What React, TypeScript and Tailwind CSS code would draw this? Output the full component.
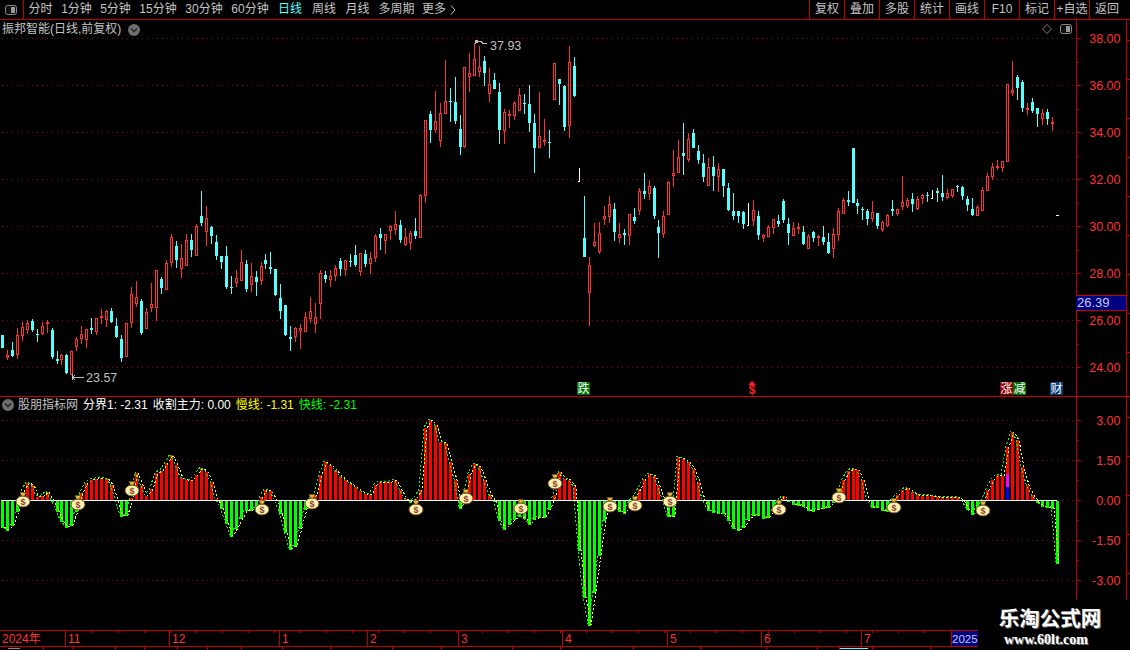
const candleData = `c,335,348,335,348 r,355,358,350,360 c,350,356,342,357 r,335,355,328,359 r,327,336,322,341 r,323,330,320,334 c,321,330,319,332 c,334,335,329,342 r,326,334,322,335 r,322,324,320,333
c,330,357,328,359 c,359,361,351,364 r,355,360,354,365 c,355,373,354,374 r,351,375,351,375 r,339,347,337,351 r,334,339,326,344 r,329,340,329,348 c,328,330,318,334 r,318,332,318,335
r,316,318,309,324 r,311,320,310,327 c,311,322,308,323 c,326,337,318,338 c,339,358,335,362 r,323,357,323,357 r,294,323,287,328 r,297,304,281,307 c,301,333,299,335 r,312,329,308,329
r,304,308,283,312 r,270,308,270,321 c,279,288,277,294 r,263,290,260,290 r,237,263,234,267 c,246,260,241,268 r,258,269,244,278 r,240,266,234,266 c,240,250,234,257 r,226,256,224,256
c,216,223,191,226 r,218,232,206,246 c,227,236,226,244 c,242,256,235,260 c,256,262,256,269 c,256,287,246,289 c,287,288,276,294 r,278,283,270,287 r,262,281,250,281 c,264,289,260,292
r,276,285,263,292 c,277,282,271,296 r,266,281,262,285 c,260,264,254,269 c,267,269,252,274 c,269,295,269,296 c,298,311,284,319 c,305,335,305,336 c,337,339,326,351 r,328,337,327,342
r,328,331,324,349 r,317,332,312,332 r,311,319,297,323 r,317,324,303,333 r,273,304,270,319 c,275,279,271,283 r,276,280,270,287 r,268,276,265,281 c,261,269,258,276 r,260,270,260,276
c,261,262,254,267 c,255,265,245,267 r,253,272,253,276 c,254,264,250,267 r,258,264,252,274 r,236,258,234,262 c,234,238,228,250 r,234,241,234,254 r,226,231,225,240 r,224,230,211,235
c,225,240,220,243 r,237,245,228,246 r,233,243,231,250 c,231,236,218,239 r,195,238,194,238 r,120,196,120,203 c,114,130,111,143 r,121,130,91,133 r,113,141,103,147 r,101,114,60,114
c,101,102,88,122 c,102,121,77,124 c,129,147,115,155 r,67,147,67,148 r,73,77,53,92 r,59,76,43,76 r,67,72,46,77 c,61,73,56,86 r,84,94,68,102 c,80,89,73,89
c,92,130,83,144 r,112,131,109,144 r,114,116,110,128 r,103,116,101,120 r,95,111,88,111 c,103,104,94,114 c,104,123,85,132 c,123,148,114,173 r,136,148,92,148 r,140,142,119,146
c,142,143,130,158 r,63,100,63,100 c,79,84,79,105 c,86,127,85,131 r,62,126,46,138 c,66,96,57,97 w,181,182,168,182 c,238,257,196,257 r,265,293,257,326 r,242,246,223,247
r,233,252,222,254 r,216,219,206,225 r,204,217,196,223 c,209,232,203,241 r,234,238,223,243 c,233,235,229,245 r,214,236,214,245 c,217,221,208,224 r,191,211,188,215 c,191,194,173,199
r,186,194,180,200 c,188,216,186,219 c,227,233,220,258 r,216,234,211,238 r,182,215,181,215 r,173,176,150,187 r,157,173,140,173 c,153,156,123,175 r,139,160,133,162 c,133,148,129,148
c,151,160,145,164 c,163,177,154,182 r,167,186,158,186 c,167,176,156,191 r,169,177,163,192 c,169,186,169,197 c,188,210,183,211 c,211,216,193,220 c,211,216,211,223 c,212,224,211,229
w,225,226,203,226 r,210,221,200,226 c,216,235,211,240 r,235,238,234,242 r,227,237,225,237 r,219,228,219,234 c,221,224,215,227 c,201,220,199,223 c,224,233,218,245 r,228,236,222,236
r,227,229,223,234 c,232,244,226,245 r,236,249,234,249 c,232,238,231,242 r,236,238,235,246 c,237,242,226,245 c,242,253,233,254 r,234,249,228,258 r,211,235,208,241 r,200,214,198,214
c,200,202,191,206 c,148,203,148,203 c,203,206,199,214 c,209,210,207,220 c,211,219,209,225 r,212,219,201,222 c,213,226,213,229 r,222,230,221,232 r,215,226,214,227 c,209,211,200,216
r,209,214,209,216 r,202,207,176,210 r,200,206,198,208 c,199,204,193,212 r,199,209,196,210 r,195,199,194,204 c,195,196,192,202 w,198,199,190,199 c,191,193,188,202 c,193,197,175,201
r,193,198,189,199 r,189,196,189,198 c,186,187,185,192 c,187,196,186,200 c,199,205,196,211 c,209,215,198,216 r,207,216,205,216 r,190,211,187,211 r,176,191,173,191 r,167,177,163,180
r,166,167,160,170 r,161,168,161,172 r,84,162,84,162 r,90,93,61,96 c,77,88,75,100 c,82,108,80,112 r,108,110,103,115 c,102,111,98,113 c,108,114,108,127 r,113,119,109,125
c,112,119,109,125 r,122,124,117,131`

const candles = candleData.split(/\s+/).map((s) => {
  const [kind, top, bottom, high, low] = s.split(',')
  return { kind, top: +top, bottom: +bottom, high: +high, low: +low }
})

const indicatorPoints = `1,526 7,530 12,525 16,516 19,500 22,492 27,483 33,485 36,497 42,496 47,492 50,500 54,502 60,520 65,527 70,527 75,517 78,500 82,490 87,481 92,480 97,479 102,478 107,478 112,487 116,500
120,505 122,527 125,520 128,505 130,500 133,495 137,466 142,490 147,497 152,487 155,473 160,473 165,465 170,457 172,452 175,462 180,477 185,480 190,481 195,477 200,468 205,470 210,478 215,497 217,500
220,505 225,520 230,537 235,530 240,520 245,510 250,510 255,510 259,500 265,490 272,491 275,500 277,503 282,520 287,540 292,555 297,540 302,520 306,505 308,500 315,495 320,475 325,462 330,465 335,470 340,476
345,480 350,484 355,487 360,491 365,494 370,495 375,485 380,482 390,482 395,480 400,490 403,497 406,500 410,502 414,500 418,495 420,490 424,430 430,420 435,425 440,442 445,443 450,462 455,480 458,500
460,508 463,500 466,490 470,468 475,463 480,468 485,483 490,497 493,500 497,505 500,527 505,530 510,523 515,518 520,516 525,518 530,525 535,517 545,517 550,507 553,500 555,490 560,468 565,482 570,480 573,482 576,497 577,500
578,540 584,597 589,625 594,592 599,555 604,520 606,503 615,505 620,512 624,513 627,510 630,500 636,495 640,487 645,477 650,473 655,477 660,492 663,500 665,520 670,513 674,517 676,503
677,457 685,460 690,463 695,473 700,488 703,500 705,508 710,512 715,512 720,513 725,513 730,525 735,530 740,530 745,525 750,515 755,515 760,515 765,520 770,515 775,507 779,500 782,497 785,493 787,500
790,503 795,505 800,505 805,507 810,512 815,510 820,508 825,508 830,507 833,502 837,498 840,492 845,472 850,470 855,469 860,472 862,480 865,495 867,500 868,508 875,507 880,508 885,512 888,510 892,500
900,492 905,487 910,490 915,495 920,496 925,495 940,497 960,497 962,500 965,507 972,514 975,510 980,506 983,500 987,490 992,480 997,475 1002,476 1007,447 1012,432 1015,443 1017,440 1022,467 1027,485 1032,495 1035,500
1037,502 1042,506 1047,507 1052,508 1057,563`
  .split(/\s+/)
  .map((s) => s.split(',').map(Number))

function indicatorAt(x: number) {
  for (let i = 1; i < indicatorPoints.length; i++) {
    const [x0, y0] = indicatorPoints[i - 1]
    const [x1, y1] = indicatorPoints[i]
    if (x <= x1) return y0 + ((y1 - y0) * (x - x0)) / (x1 - x0)
  }
  return 500
}

const xOf = (i: number) => Math.floor(2.3 + i * 4.975)
const barXs = Array.from({ length: 212 }, (_, i) => xOf(i)).concat(1057)

const bags = [
  [23, 499], [78, 502], [132, 488], [262, 507], [312, 501], [416, 507], [466, 496], [521, 506],
  [555, 481], [610, 504], [635, 503], [670, 499], [779, 507], [839, 495], [894, 505], [983, 508],
]

const RED = '#ff3232'
const CYAN = '#54ffff'
const AXIS = '#c00000'
const GRID = '#a80000'

const leftButtons = [
  ['分时', 'w-[33px]'], ['1分钟', 'w-[39px]'], ['5分钟', 'w-[39px]'], ['15分钟', 'w-[46px]'], ['30分钟', 'w-[46px]'],
  ['60分钟', 'w-[46px]'], ['日线', 'w-[34px] text-[#54ffff]'], ['周线', 'w-[34px]'], ['月线', 'w-[33px]'], ['多周期', 'w-[45px]'],
]
const rightButtons = ['复权', '叠加', '多股', '统计', '画线', 'F10', '标记', '+自选', '返回']

const months = [
  ['2024年', 'w-[66px]'], ['11', 'w-[104px]'], ['12', 'w-[110px]'], ['1', 'w-[88px]'], ['2', 'w-[91px]'],
  ['3', 'w-[104px]'], ['4', 'w-[105px]'], ['5', 'w-[94px]'], ['6', 'w-[100px]'], ['7', 'w-[90px]'],
]

function PanelIcon({ className }: { className: string }) {
  return (
    <svg viewBox="0 0 12 10" className={className} width="12" height="10">
      <rect x="0.5" y="0.5" width="11" height="9" rx="2" fill="#111" stroke="#8a8a8a" />
      <rect x="6" y="2" width="4" height="6" fill="#9a9a9a" />
    </svg>
  )
}

function ChevronCircle({ className }: { className: string }) {
  return (
    <svg viewBox="0 0 12 12" width="12" height="12" className={className}>
      <circle cx="6" cy="6" r="6" fill="#6e6e6e" />
      <path d="M3 4.5 L6 7.5 L9 4.5" fill="none" stroke="#222" strokeWidth="1.4" />
    </svg>
  )
}

function PriceChart() {
  const prices = [38, 36, 34, 32, 30, 28, 26, 24]
  return (
    <svg viewBox="0 20 1076 376" width="1076" height="376" shapeRendering="crispEdges" className="block">
      {prices.map((_, i) => (
        <line key={i} x1="2" x2="1076" y1={38.5 + i * 47} y2={38.5 + i * 47} stroke={GRID} strokeDasharray="1 4" />
      ))}
      {candles.map((c, i) => {
        const x = xOf(i)
        if (c.kind === 'c') {
          return (
            <g key={i} fill={CYAN}>
              <rect x={x} y={c.high} width="1" height={c.low - c.high} />
              <rect x={x - 1} y={c.top} width="3" height={c.bottom - c.top} />
            </g>
          )
        }
        if (c.kind === 'w') {
          return (
            <g key={i} fill="#fff">
              <rect x={x} y={c.high} width="1" height={c.low - c.high} />
              <rect x={x - 1} y={c.top} width="2" height="1" />
            </g>
          )
        }
        return (
          <g key={i}>
            <rect x={x} y={c.high} width="1" height={c.top - c.high} fill={RED} />
            <rect x={x} y={c.bottom} width="1" height={c.low - c.bottom} fill={RED} />
            <rect x={x - 0.5} y={c.top + 0.5} width="2" height={Math.max(c.bottom - c.top - 1, 1)} fill="#000" stroke={RED} />
          </g>
        )
      })}
      <rect x="1056" y="215" width="3" height="1" fill="#fff" />
      <g fill="none" stroke="#c0c0c0">
        <path d="M72 377.5 H84 M72 377.5 L75 375 M72 377.5 L75 380 M72 374 V380" />
        <path d="M475.5 40 V44 M476 41.5 H481 L483 43.5 H487 M476 41.5 L478 40 M476 41.5 L478 43" />
      </g>
      <text x="86" y="382" fontSize="12.5" fill="#c0c0c0">23.57</text>
      <text x="490" y="50" fontSize="12.5" fill="#c0c0c0">37.93</text>
    </svg>
  )
}

function Bag({ x, y }: { x: number; y: number }) {
  return (
    <g shapeRendering="auto">
      <ellipse cx={x} cy={y + 2.5} rx="7" ry="5.5" fill="#fff2b0" stroke="#6a4a1c" strokeWidth="1" />
      <path d={`M${x - 3} ${y - 6.5} H${x + 3} L${x + 1.5} ${y - 3} H${x - 1.5} Z`} fill="#e8b838" stroke="#6a4a1c" strokeWidth="0.7" />
      <text x={x} y={y + 6} fontSize="9" fontWeight="700" textAnchor="middle" fill="#8a3c30">$</text>
    </g>
  )
}

function IndicatorChart() {
  const values = barXs.map((x) => indicatorAt(x))
  const fastLine = barXs.map((x, i) => `${x - 1},${Math.round(values[i]) - 1}`).join(' ')
  const slowLine = barXs.map((x, i) => `${x + 2},${Math.round(values[i])}`).join(' ')
  return (
    <svg viewBox="0 397 1076 233" width="1076" height="233" shapeRendering="crispEdges" className="block">
      {[420.5, 460.5, 500.5, 540.5, 580.5].map((y) => (
        <line key={y} x1="2" x2="1076" y1={y} y2={y} stroke={GRID} strokeDasharray="1 4" />
      ))}
      {barXs.map((x, i) => {
        const y = Math.round(values[i])
        if (Math.abs(y - 500) < 1) return null
        return y < 500 ? (
          <rect key={i} x={x - 1} y={y} width="3" height={500 - y} fill="#ff0000" />
        ) : (
          <rect key={i} x={x - 1} y="501" width="3" height={y - 500} fill="#00ff00" />
        )
      })}
      <rect x="1006" y="487" width="3" height="13" fill="#0000ff" />
      <rect x="1006" y="474" width="3" height="13" fill="#ff00ff" />
      <polyline points={slowLine} fill="none" stroke="#ffff00" strokeDasharray="2 2" />
      <polyline points={fastLine} fill="none" stroke="#00ff00" strokeDasharray="2 2" />
      <rect x="1" y="500" width="1056" height="1" fill="#fff" />
      {bags.map(([x, y], i) => (
        <Bag key={i} x={x} y={y} />
      ))}
    </svg>
  )
}

function AxisColumn({ top, height, labels }: { top: number; height: number; labels: { y: number; text: string }[] }) {
  const minor = labels.slice(1).map((l, i) => (l.y + labels[i].y) / 2)
  const rail = Array.from({ length: Math.floor(height / 39) }, (_, i) => top + 20 + i * 39)
  return (
    <svg viewBox={`1076 ${top} 54 ${height}`} width="54" height={height} shapeRendering="crispEdges" className="block">
      <rect x="1075" y={top} width="1" height={height} fill={AXIS} />
      <rect x="1076" y={top} width="1" height={height} fill={AXIS} />
      {labels.map((l) => (
        <g key={l.text}>
          <rect x="1076" y={Math.floor(l.y)} width="5" height="1" fill={AXIS} />
          <text x="1120.5" y={Math.floor(l.y) + 5} textAnchor="end" fontSize="12.5" fill={RED}>
            {l.text}
          </text>
        </g>
      ))}
      {minor.map((y) => (
        <rect key={y} x="1076" y={Math.floor(y)} width="3" height="1" fill={AXIS} />
      ))}
      <rect x="1126" y={top} width="1" height={height} fill={AXIS} />
      {rail.map((y) => (
        <rect key={y} x="1127" y={y} width="3" height="1" fill={AXIS} />
      ))}
    </svg>
  )
}

function Marker({ text, className }: { text: string; className: string }) {
  return (
    <div className={`absolute top-[362px] flex h-[13px] w-[13px] items-center justify-center text-[12px] leading-none text-white ${className}`}>
      {text}
    </div>
  )
}

export default function App() {
  const priceLabels = [38, 36, 34, 32, 30, 28, 26, 24].map((p, i) => ({ y: 38.5 + i * 47, text: p.toFixed(2) }))
  const indicatorLabels = ['3.00', '1.50', '0.00', '-1.50', '-3.00'].map((t, i) => ({ y: 420.5 + i * 40, text: t }))
  const axisTicks = Array.from({ length: 34 }, (_, i) => 92 + i * 26)
  const stripTicks = [43, 73, 115, 144, 177, 207, 241, 282, 330, 392, 441, 512, 560, 633, 700, 766, 817, 839, 872, 930]

  return (
    <div className="relative h-[650px] w-[1130px] overflow-hidden bg-black font-['Liberation_Sans','Noto_Sans_CJK_SC',sans-serif] text-[12px]">
      {/* toolbar */}
      <div className="flex h-5 items-center justify-between border-b border-[#c00000] text-[#c4c4c4]">
        <div className="flex h-full items-center">
          <div className="flex h-full w-6 items-center justify-center border-r border-[#c00000]">
            <PanelIcon className="block -translate-x-px" />
          </div>
          <div className="flex">
            {leftButtons.map(([label, width]) => (
              <div key={label} className={`whitespace-nowrap text-center leading-[19px] ${width}`}>
                {label}
              </div>
            ))}
            <div className="ml-[3px] flex items-center gap-1 whitespace-nowrap leading-[19px]">
              更多
              <svg viewBox="0 0 6 10" width="6" height="10">
                <path d="M1 0.5 L5 5 L1 9.5" fill="none" stroke="#c4c4c4" />
              </svg>
            </div>
          </div>
        </div>
        <div className="flex h-full">
          {rightButtons.map((label) => (
            <div key={label} className="w-[35px] whitespace-nowrap border-l border-[#c00000] text-center leading-[19px]">
              {label}
            </div>
          ))}
          <div className="w-[6px]" />
        </div>
      </div>

      {/* price pane */}
      <div className="relative flex h-[377px] border-b border-[#cc0000]">
        <PriceChart />
        <AxisColumn top={20} height={376} labels={priceLabels} />
        <div className="absolute left-[2px] top-px flex items-center gap-[7px] whitespace-nowrap leading-[17px] text-[#c4c4c4]">
          振邦智能(日线,前复权)
          <ChevronCircle className="block" />
        </div>
        <svg viewBox="0 0 10 10" width="10" height="10" className="absolute left-[1042px] top-1">
          <path d="M5 0.5 L9.5 5 L5 9.5 L0.5 5 Z" fill="none" stroke="#808080" />
        </svg>
        <PanelIcon className="absolute left-[1060px] top-1" />
        <Marker text="跌" className="left-[577px] bg-[#007000]" />
        <div className="absolute left-[746px] top-[361px] flex w-3 flex-col items-center text-[#ff2020]">
          <svg viewBox="0 0 8 4" width="8" height="4" className="block">
            <path d="M4 0 L8 4 H0 Z" fill="#ff2020" />
          </svg>
          <div className="text-[12px] font-bold leading-[10px]">$</div>
        </div>
        <Marker text="涨" className="left-[1000px] bg-[#900000]" />
        <Marker text="减" className="left-[1013px] bg-[#007000]" />
        <Marker text="财" className="left-[1050px] bg-[#0a3c78]" />
        <div className="absolute left-[1076px] top-[275px] h-4 w-[50px] border-y border-[#cc0000] bg-[#000080] pl-px text-[13px] leading-[14px] text-[#c8c8e8]">
          26.39
        </div>
      </div>

      {/* indicator pane */}
      <div className="relative flex h-[233px]">
        <IndicatorChart />
        <AxisColumn top={397} height={233} labels={indicatorLabels} />
        <div className="absolute left-[2px] top-0 flex items-center whitespace-nowrap leading-4 text-[#d8d8d8]">
          <ChevronCircle className="mr-1 block" />
          <span className="mr-[5px] text-[#c4c4c4]">股朋指标网</span>
          <span className="mr-[5px] text-white">分界1: -2.31</span>
          <span className="mr-[5px] text-white">收割主力: 0.00</span>
          <span className="mr-[5px] text-[#ffff00]">慢线: -1.31</span>
          <span className="text-[#00ff00]">快线: -2.31</span>
        </div>
      </div>

      {/* time axis */}
      <div className="relative flex h-[17px] border-y border-[#c00000] text-[#ff3232]">
        {months.map(([label, width]) => (
          <div key={label} className={`border-r border-[#c00000] pl-[2px] leading-[17px] ${width}`}>
            {label}
          </div>
        ))}
        <div className="w-[26px] overflow-hidden bg-[#000080] text-[11.5px] leading-[17px] text-[#c8c8e8]">2025</div>
        <svg viewBox="0 0 950 3" width="950" height="3" className="absolute left-0 top-0" shapeRendering="crispEdges">
          {axisTicks.map((x) => (
            <rect key={x} x={x} y="0" width="1" height="2" fill={AXIS} />
          ))}
        </svg>
      </div>

      {/* clipped strip under the axis */}
      <svg viewBox="0 0 978 4" width="978" height="4" className="block" shapeRendering="crispEdges">
        {stripTicks.map((x) => (
          <rect key={x} x={x} y="0" width="1" height="4" fill={AXIS} />
        ))}
        <rect x="8" y="1" width="12" height="1" fill="#888" />
        <rect x="840" y="1" width="28" height="1" fill="#54ffff" />
      </svg>

      {/* watermark */}
      <div className="absolute bottom-0 right-0 flex h-[50px] w-[152px] flex-col items-center bg-black pr-2">
        <div className="mt-[6px] whitespace-nowrap text-[20.5px] font-bold leading-[26px] text-white [text-shadow:1px_1px_0_#777]">
          乐淘公式网
        </div>
        <div className="whitespace-nowrap pr-2 font-['Liberation_Serif',serif] text-[14px] font-bold leading-4 text-white [text-shadow:1px_1px_0_#777]">
          www.60lt.com
        </div>
      </div>
    </div>
  )
}
